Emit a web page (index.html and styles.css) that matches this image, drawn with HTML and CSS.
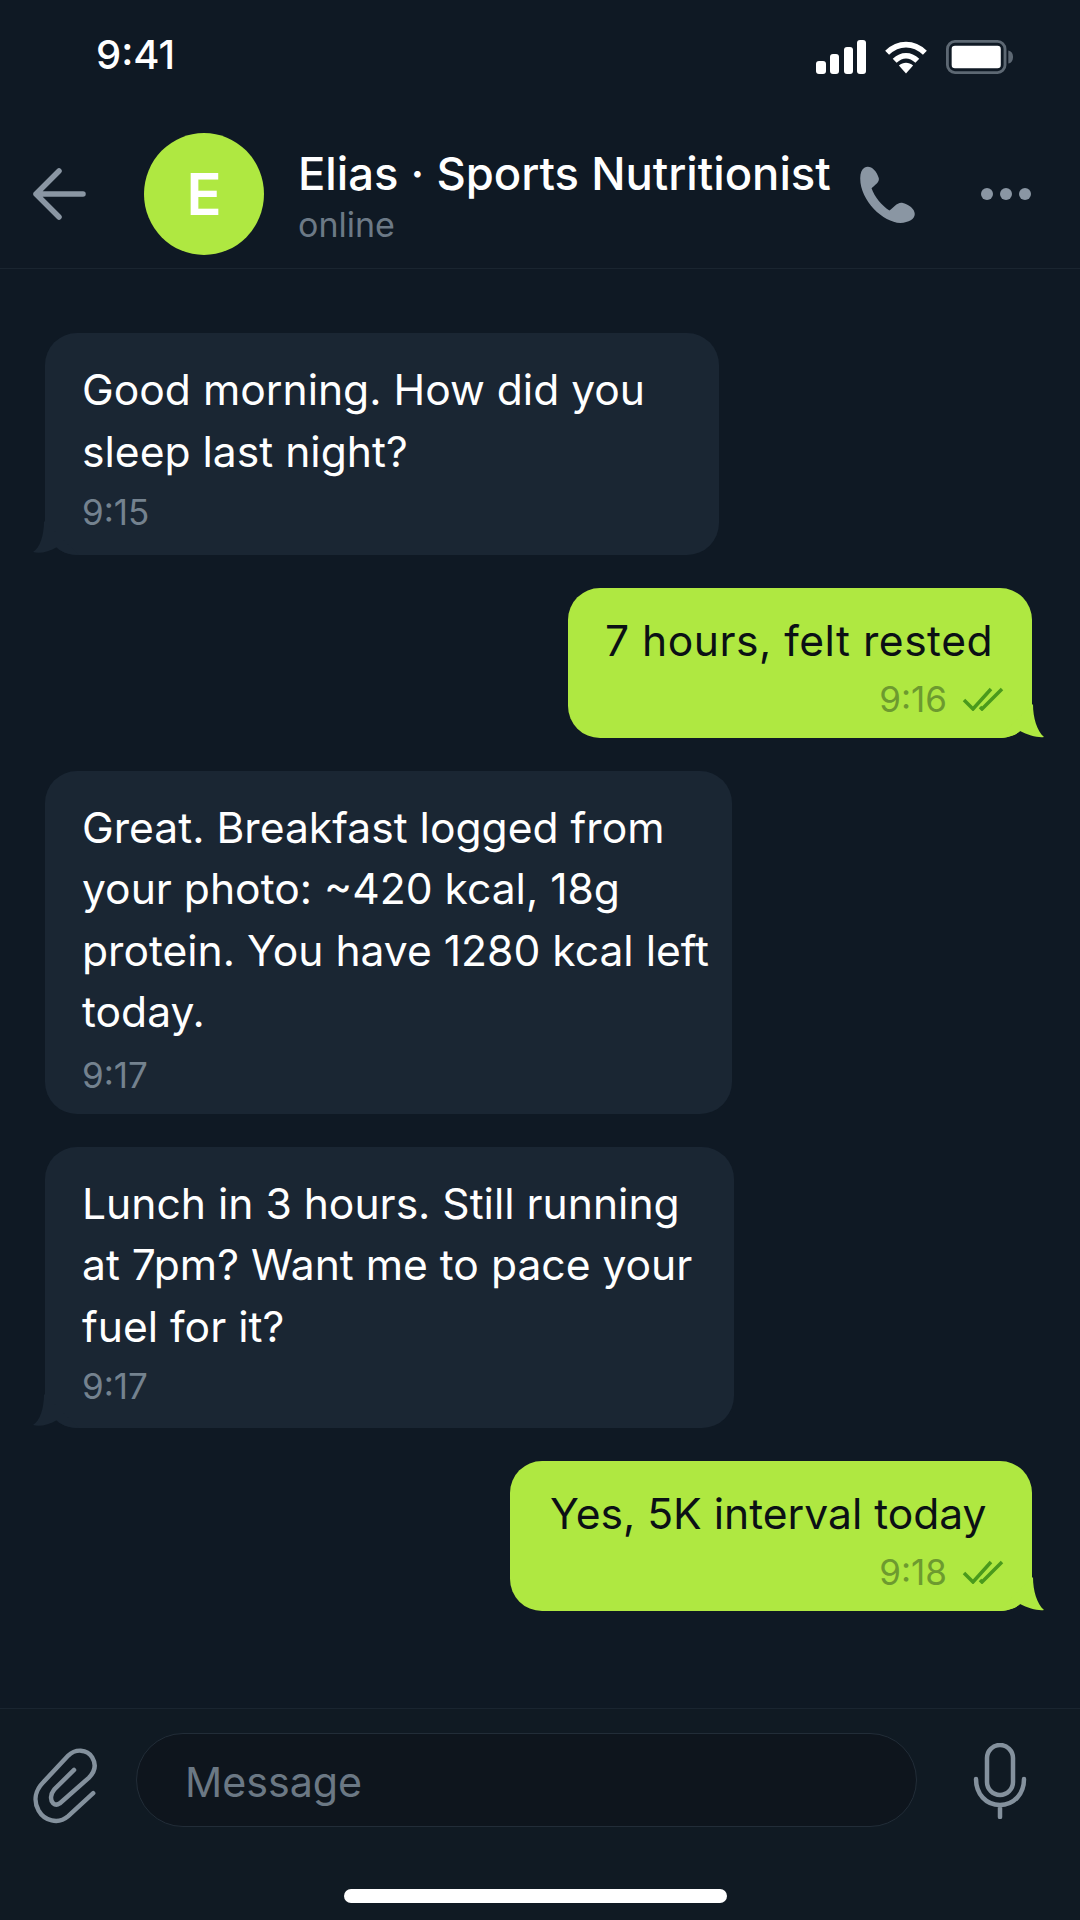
FILE: index.html
```html
<!DOCTYPE html>
<html lang="en">
<head>
<meta charset="utf-8">
<title>Elias · Sports Nutritionist</title>
<link rel="stylesheet" href="styles.css">
</head>
<body>
<div class="screen">
  <div class="status">
    <span class="clock">9:41</span>
    <div class="status-icons">
      <svg class="sig" viewBox="0 0 50 34"><rect x="0" y="21" width="10" height="13" rx="3"/><rect x="14" y="14" width="9" height="20" rx="3"/><rect x="28" y="7" width="9" height="27" rx="3"/><rect x="41" y="0" width="9" height="34" rx="3"/></svg>
      <svg class="wifi" viewBox="0 0 46 36"><path d="M3 13.500C15 2 31 2 43 13.500" fill="none" stroke="#fff" stroke-width="6"/><path d="M11 22c7.500-7 16.500-7 24 0" fill="none" stroke="#fff" stroke-width="6"/><path d="M15.500 27c4.500-4 10.500-4 15 0L23 35.500z"/></svg>
      <svg class="batt" viewBox="0 0 72 36"><rect x="1.500" y="1.500" width="61" height="33" rx="8" fill="none" stroke="#5d6873" stroke-width="3"/><rect x="6" y="6" width="52" height="24" rx="3.500"/><path d="M66 11c3 .5 5 3 5 7s-2 6.500-5 7z" fill="#5d6873"/></svg>
    </div>
  </div>

  <header class="chat-head">
    <svg class="back" viewBox="0 0 54 54"><path d="M3 27h47M26 4 3 27l23 23" fill="none" stroke="#8a96a3" stroke-width="5.500" stroke-linecap="round" stroke-linejoin="round"/></svg>
    <div class="avatar">E</div>
    <div class="who">
      <div class="name">Elias · Sports Nutritionist</div>
      <div class="presence">online</div>
    </div>
    <svg class="phone" viewBox="930 497 165 172"><path d="M945 505C960 495 980 510 987 535C990 548 975 555 966 565C975 590 995 615 1018 630C1030 622 1040 605 1055 607C1075 612 1092 625 1092 640C1092 655 1075 665 1050 666C1000 665 932 600 933 535C933 520 938 510 945 505Z" fill="#8a96a3"/></svg>
    <div class="more"><i></i><i></i><i></i></div>
  </header>

  <main class="thread">
    <div class="bubble in w1">
      <p>Good morning. How did you<br>sleep last night?</p>
      <div class="meta">9:15</div>
      <svg class="tail" viewBox="0 0 46 34"><path d="M11 0C11 14 7 27 0 31C6 33 16 31 24 26C28 31 36 34 46 34Z"/></svg>
    </div>
    <div class="bubble out w2">
      <p>7 hours, felt rested</p>
      <div class="meta">9:16 <svg class="ticks" viewBox="0 0 42 24"><path d="M2 13 11 22 29 2M18 20 20 22 40 2" fill="none" stroke="#4a9a1c" stroke-width="3.500"/></svg></div>
      <svg class="tail" viewBox="0 0 46 34"><path d="M35 0C35 14 39 27 46 33C40 34 30 31 22 27C18 31 10 34 0 34Z"/></svg>
    </div>
    <div class="bubble in w3">
      <p>Great. Breakfast logged from<br>your photo: ~420 kcal, 18g<br>protein. You have 1280 kcal left<br>today.</p>
      <div class="meta">9:17</div>
    </div>
    <div class="bubble in w4">
      <p>Lunch in 3 hours. Still running<br>at 7pm? Want me to pace your<br>fuel for it?</p>
      <div class="meta">9:17</div>
      <svg class="tail" viewBox="0 0 46 34"><path d="M11 0C11 14 7 27 0 31C6 33 16 31 24 26C28 31 36 34 46 34Z"/></svg>
    </div>
    <div class="bubble out w5">
      <p>Yes, 5K interval today</p>
      <div class="meta">9:18 <svg class="ticks" viewBox="0 0 42 24"><path d="M2 13 11 22 29 2M18 20 20 22 40 2" fill="none" stroke="#4a9a1c" stroke-width="3.500"/></svg></div>
      <svg class="tail" viewBox="0 0 46 34"><path d="M35 0C35 14 39 27 46 33C40 34 30 31 22 27C18 31 10 34 0 34Z"/></svg>
    </div>
  </main>

  <footer class="composer">
    <svg class="clip" viewBox="92 188 190 226"><path d="M268 325 195 392C165 418 125 405 108 375C92 345 100 315 122 293L195 215C215 195 250 195 265 220C280 245 270 265 255 280L170 355C155 365 143 350 145 335C145 325 150 320 155 313L212 257" fill="none" stroke="#84919d" stroke-width="13" stroke-linecap="round" stroke-linejoin="round"/></svg>
    <div class="field">Message</div>
    <svg class="mic" viewBox="0 0 54 76"><rect x="14" y="2" width="26" height="50" rx="13" fill="none" stroke="#84919d" stroke-width="4.500"/><path d="M3 36c0 15 10 26 24 26s24-11 24-26M27 62v12" fill="none" stroke="#84919d" stroke-width="4.500" stroke-linecap="round"/></svg>
  </footer>
  <div class="home-zone"><div class="home"></div></div>
</div>
</body>
</html>
```
FILE: styles.css
```css
* { box-sizing: border-box; }
html, body { margin: 0; padding: 0; }
body { background: #0f1924; font-family: Inter, "Liberation Sans", sans-serif; }
.screen { width: 1080px; height: 1920px; display: flex; flex-direction: column; overflow: hidden; background: #0f1924; color: #fff; }

.status { height: 115px; padding: 33px 65px 0 96px; display: flex; justify-content: space-between; align-items: flex-start; flex: none; }
.clock { font-size: 40px; line-height: 44px; font-weight: 500; }
.status-icons { display: flex; gap: 17px; }
.status-icons svg { height: 34px; fill: #fff; display: block; margin-top: 7px; }
.sig { width: 52px; }
.wifi { width: 44px; }
.batt { width: 70px; }

.chat-head { height: 154px; flex: none; display: flex; align-items: flex-start; padding: 0 49px 0 33px; border-bottom: 1px solid #1a2530; }
.back { width: 54px; height: 54px; flex: none; margin-top: 52px; }
.avatar { width: 120px; height: 122px; margin: 18px 0 0 57px; border-radius: 50%; background: #afe841; flex: none; display: flex; align-items: center; justify-content: center; font-size: 58px; font-weight: 600; }
.who { margin: 31px 0 0 34px; width: 561px; flex: none; }
.name { font-size: 45.4px; line-height: 56px; font-weight: 500; white-space: nowrap; }
.presence { font-size: 34px; line-height: 46px; color: #6c7986; }
.phone { width: 57px; height: 59px; flex: none; margin-top: 50px; }
.more { margin: 73px 0 0 auto; display: flex; gap: 7px; }
.more i { width: 12px; height: 12px; border-radius: 50%; background: #8a96a3; display: block; }

.thread { flex: 1; display: flex; flex-direction: column; gap: 33px; padding: 64px 48px 0 45px; }
.bubble { position: relative; border-radius: 32px; padding: 26px 36px 17px 37px; font-size: 42.6px; line-height: 61.5px; flex: none; }
.bubble p { margin: 0; white-space: nowrap; }
.in { background: #1a2633; align-self: flex-start; }
.out { background: #afe841; color: #0b1015; align-self: flex-end; padding: 22px 28px 17px 37px; }
.w1 { width: 674px; padding-bottom: 21px; }
.w1 .meta { margin-top: 8px; }
.w2 { width: 464px; }
.w2 p { letter-spacing: .5px; }
.w3 { width: 687px; }
.w4 { width: 689px; padding-bottom: 20px; }
.w4 .meta { margin-top: 7px; }
.w5 { width: 522px; padding-left: 40px; }
.meta { font-size: 35px; line-height: 44px; color: #74828f; margin-top: 10px; }
.out .meta { color: #6d9a2f; display: flex; justify-content: flex-end; align-items: center; gap: 15px; margin-top: 5px; }
.ticks { width: 42px; height: 24px; }
.tail { position: absolute; bottom: 0; width: 46px; height: 34px; }
.in .tail { left: -12px; fill: #1a2633; }
.out .tail { right: -12px; fill: #afe841; }

.composer { flex: none; height: 181px; display: flex; align-items: flex-start; padding: 24px 0 0 33px; border-top: 1px solid #1a2530; background: #101a23; }
.clip { width: 65px; height: 78px; margin-top: 13px; flex: none; }
.field { width: 781px; height: 94px; margin-left: 38px; border-radius: 47px; border: 1px solid #222d38; background: #0e151d; padding: 3px 0 0 48px; display: flex; align-items: center; font-size: 41.2px; color: #6b7884; flex: none; }
.mic { width: 54px; height: 76px; margin: 10px 0 0 56px; flex: none; }
.home-zone { background: #101a23; flex: none; height: 31px; display: flex; justify-content: center; padding-right: 10px; }
.home { width: 383px; height: 14px; border-radius: 7px; background: #fff; }
```
